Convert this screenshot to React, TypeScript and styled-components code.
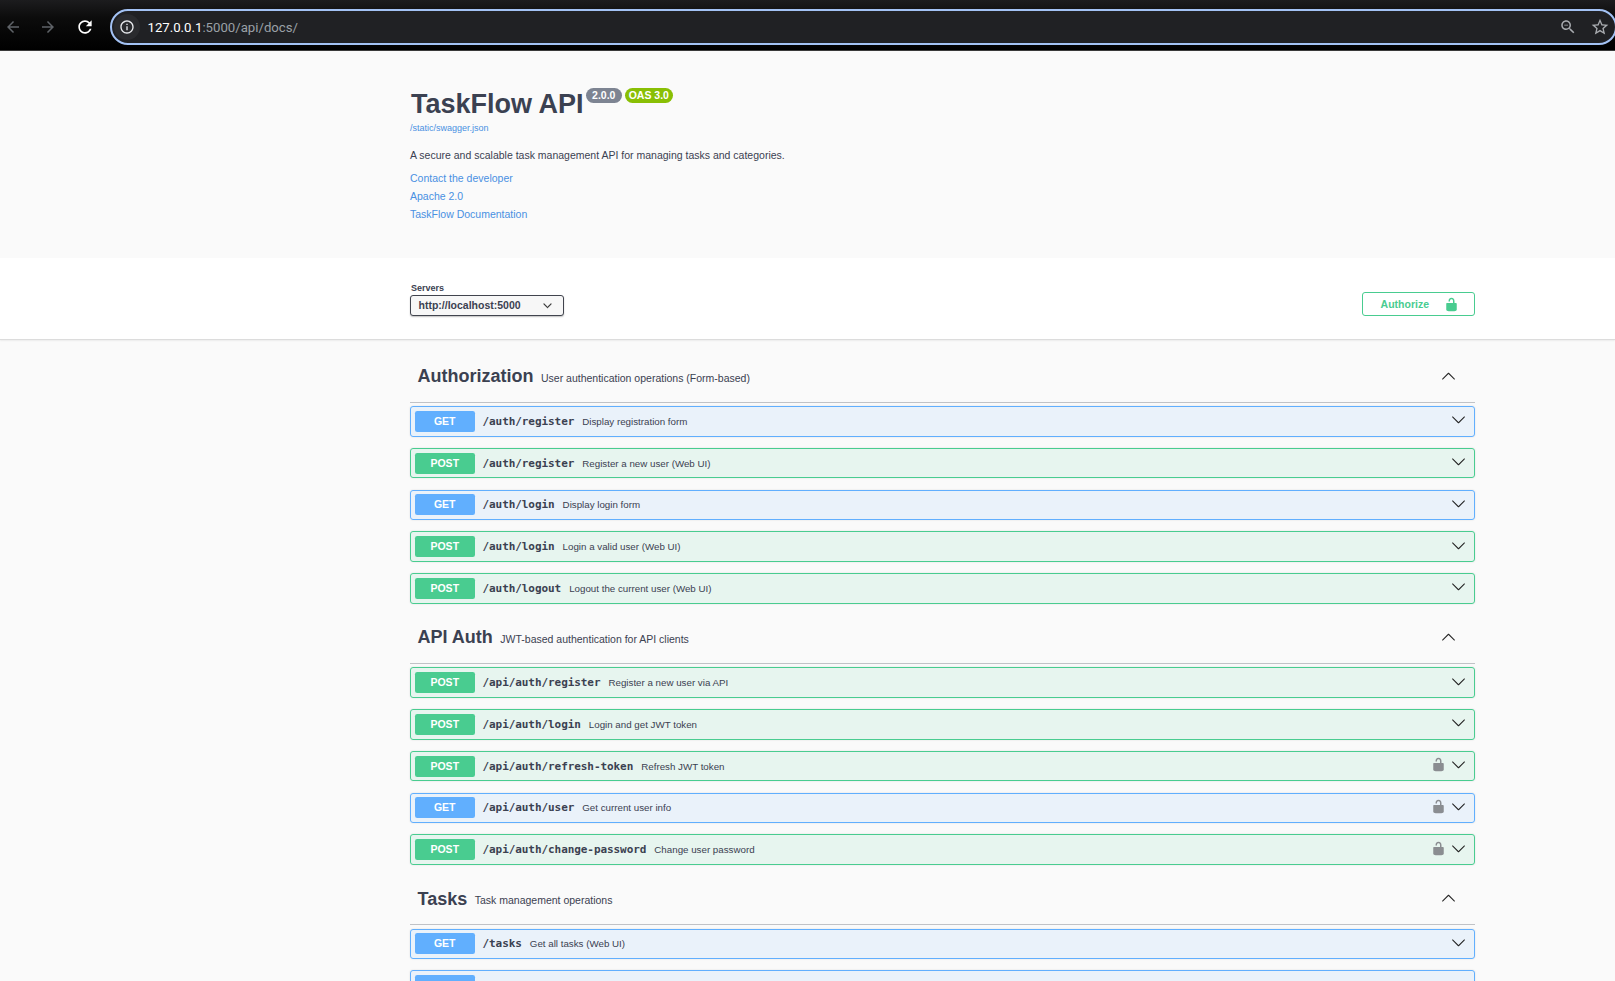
import React from "react";
import styled, { createGlobalStyle } from "styled-components";

const Global = createGlobalStyle`
  html, body { margin: 0; padding: 0; height: 981px; overflow: hidden; background: #fafafa; }
  #root { height: 981px; overflow: hidden; }
  * { box-sizing: border-box; }
`;
const SANS = `"Liberation Sans", Arial, sans-serif`;

const Page = styled.div`
  height: 981px; overflow: hidden; font-family: ${SANS}; color: #3b4151; background: #fafafa;
`;
const BrowserBar = styled.div`
  height: 51px; display: flex; align-items: flex-start; padding: 9px 0 0 0; border-bottom: 1px solid #3a3a3a;
  background: linear-gradient(#1c1c1e 0%, #0c0c0c 35%, #000 100%);
`;
const NavButton = styled.div<{ $w: number }>`
  width: ${p => p.$w}px; height: 36px; display: flex; align-items: center; justify-content: center; flex: none;
`;
const Omnibox = styled.div`
  flex: 1; height: 36px; margin-left: 11.5px; margin-right: -2px; border: 2px solid #a3c2f4; border-radius: 18px;
  background: #202124; display: flex; align-items: center; padding: 0 5px 0 0;
`;
const InfoChip = styled.div`
  width: 26px; height: 26px; margin-left: 2px; border-radius: 50%; background: #2a2b2e;
  display: flex; align-items: center; justify-content: center; flex: none;
`;
const Url = styled.div`
  margin-left: 8px; font-family: "Roboto", "Liberation Sans", sans-serif; font-size: 13.2px; color: #9aa0a6; flex: 1;
  span { color: #fff; }
`;
const OmniIcons = styled.div`
  display: flex; align-items: center; gap: 13px;
`;
const Wrapper = styled.div`
  margin-left: 410px; width: 1065px;
`;
const InfoSection = styled.section`
  height: 207px; padding-top: 29px;
`;
const TitleRow = styled.div`
  display: flex; align-items: flex-start; height: 41px; padding-left: 1px;
`;
const Title = styled.h1`
  margin: 7px 0 0; font-size: 27px; line-height: 34px; font-weight: 700; color: #3b4151; font-family: ${SANS};
`;
const Badge = styled.span<{ $bg: string; $ml: number; $pad: number }>`
  display: inline-block; margin: 7.5px 0 0 ${p => p.$ml}px; height: 15.5px; line-height: 15.5px; padding: 0 ${p => p.$pad}px; border-radius: 7.5px;
  background: ${p => p.$bg}; color: #fff; font-size: 10.5px; font-weight: 700; font-family: ${SANS};
`;
const SpecLink = styled.a`
  display: block; font-size: 9px; line-height: 11px; color: #4990e2; margin-top: 2px;
`;
const Desc = styled.p`
  margin: 12.5px 0 0; font-size: 10.5px; line-height: 16px; color: #3b4151;
`;
const InfoLink = styled.a`
  display: block; font-size: 10.5px; line-height: 18px; color: #4990e2;
`;
const Links = styled.div`
  margin-top: 6px;
`;
const SchemeBar = styled.div`
  height: 82px; background: #fff; border-bottom: 1px solid #dcdcdc; box-shadow: 0 1px 1.5px rgba(0,0,0,.06);
`;
const SchemeInner = styled.div`
  margin-left: 410px; width: 1065px; height: 100%; display: flex; justify-content: space-between; align-items: flex-start; padding-top: 25px;
`;
const ServerBox = styled.div`
  display: flex; flex-direction: column;
`;
const ServerLabel = styled.span`
  font-size: 9px; line-height: 10px; font-weight: 700; color: #3b4151; padding-left: 1px;
`;
const Select = styled.div`
  width: 154px; height: 21px; margin-top: 1.5px; border: 1.5px solid #41444e; border-radius: 3px; background: #f7f7f7;
  box-shadow: 0 1px 1.5px rgba(0,0,0,.25); display: flex; align-items: center; justify-content: space-between;
  padding: 0 11px 0 7.5px; font-size: 10.5px; font-weight: 700; color: #3b4151;
`;
const AuthorizeButton = styled.button`
  width: 113px; height: 24px; margin-top: 9px; border: 1.5px solid #49cc90; border-radius: 3px; background: transparent;
  color: #49cc90; font-family: ${SANS}; font-size: 10.5px; font-weight: 700; display: flex; align-items: center; justify-content: flex-end;
  padding: 0 15px 0 0; gap: 15px;
`;
const OpList = styled(Wrapper)`
  padding-top: 13.5px;
`;
const TagSection = styled.section`
  display: flex; flex-direction: column;
`;
const TagHeader = styled.div`
  height: 49px; border-bottom: 1px solid rgba(59,65,81,.3); display: flex; align-items: center; padding: 0 19px 3px 7.5px; margin-bottom: 3.5px;
`;
const TagName = styled.h3`
  margin: 0; font-size: 18px; font-weight: 700; color: #3b4151; line-height: 24px;
`;
const TagDesc = styled.small`
  margin-left: 7.5px; padding-top: 3px; font-size: 10.5px; color: #3b4151; flex: 1;
`;
const Op = styled.div<{ $c: string }>`
  height: 30.5px; margin-bottom: 11.25px; flex: none; display: flex; align-items: center; padding: 0 8px 0 3.75px; border-radius: 3px;
  border: 1px solid ${p => p.$c}; background: ${p => p.$c}1a; box-shadow: 0 0 2px rgba(0,0,0,.12);
`;
const Method = styled.span<{ $c: string }>`
  width: 60px; height: 21px; flex: none; border-radius: 2.25px; background: ${p => p.$c}; color: #fff; text-align: center;
  font-size: 10.5px; line-height: 21px; font-weight: 700;
`;
const Path = styled.span`
  margin-left: 7.75px; font-family: "DejaVu Sans Mono", monospace; font-size: 11px; font-weight: 700; letter-spacing: -0.07px; color: #3b4151;
`;
const Summary = styled.span`
  margin-left: 8px; font-size: 9.75px; color: #3b4151; flex: 1;
`;
const RowLock = styled.span`
  display: flex; margin: -3px 5px 0 0;
`;
const RowChevron = styled.span`
  display: flex; margin-top: -3px;
`;
const ArrowSvg = styled.svg<{ $up?: boolean }>`
  width: 15px; height: 15px; fill: #222; flex: none; transform: ${p => (p.$up ? "rotate(180deg)" : "none")};
`;

const ARROW = "M17.418 6.109c.272-.268.709-.268.979 0s.271.701 0 .969l-7.908 7.83c-.27.268-.707.268-.979 0l-7.908-7.83c-.27-.268-.27-.701 0-.969.271-.268.709-.268.979 0L10 13.25l7.418-7.141z";
const LOCK = "M15.8 8H14V5.6C14 2.703 12.665 1 10 1 7.334 1 6 2.703 6 5.6V6h2v-.801C8 3.754 8.797 3 10 3c1.203 0 2 .754 2 2.199V8H4c-.553 0-1 .646-1 1.199V17c0 .549.428 1.139.951 1.307l1.197.387C5.672 18.861 6.55 19 7.1 19h5.8c.549 0 1.428-.139 1.951-.307l1.196-.387c.524-.167.953-.757.953-1.306V9.199C17 8.646 16.352 8 15.8 8z";

const Lock = ({ color, size }: { color: string; size: number }) => (
  <svg viewBox="0 0 20 20" width={size} height={size} fill={color}><path d={LOCK} /></svg>
);
const Arrow = ({ up }: { up?: boolean }) => (
  <ArrowSvg $up={up} viewBox="0 0 20 20"><path d={ARROW} /></ArrowSvg>
);
const Mat = ({ d, color, size = 20 }: { d: string; color: string; size?: number }) => (
  <svg viewBox="0 0 24 24" width={size} height={size} fill={color}><path d={d} /></svg>
);

type OpData = { m: "GET" | "POST"; p: string; s: string; lock?: boolean };
const SECTIONS: { name: string; desc: string; ops: OpData[] }[] = [
  { name: "Authorization", desc: "User authentication operations (Form-based)", ops: [
    { m: "GET", p: "/auth/register", s: "Display registration form" },
    { m: "POST", p: "/auth/register", s: "Register a new user (Web UI)" },
    { m: "GET", p: "/auth/login", s: "Display login form" },
    { m: "POST", p: "/auth/login", s: "Login a valid user (Web UI)" },
    { m: "POST", p: "/auth/logout", s: "Logout the current user (Web UI)" },
  ]},
  { name: "API Auth", desc: "JWT-based authentication for API clients", ops: [
    { m: "POST", p: "/api/auth/register", s: "Register a new user via API" },
    { m: "POST", p: "/api/auth/login", s: "Login and get JWT token" },
    { m: "POST", p: "/api/auth/refresh-token", s: "Refresh JWT token", lock: true },
    { m: "GET", p: "/api/auth/user", s: "Get current user info", lock: true },
    { m: "POST", p: "/api/auth/change-password", s: "Change user password", lock: true },
  ]},
  { name: "Tasks", desc: "Task management operations", ops: [
    { m: "GET", p: "/tasks", s: "Get all tasks (Web UI)" },
    { m: "GET", p: "", s: "" },
  ]},
];
const COLORS = { GET: "#61affe", POST: "#49cc90" };

export default function App() {
  return (
    <Page>
      <Global />
      <BrowserBar>
        <NavButton $w={25}><Mat color="#5f6368" size={18} d="M20 11H7.83l5.59-5.59L12 4l-8 8 8 8 1.41-1.41L7.83 13H20v-2z" /></NavButton>
        <NavButton $w={46}><Mat color="#5f6368" size={18} d="M4 11h12.17l-5.59-5.59L12 4l8 8-8 8-1.41-1.41L16.17 13H4v-2z" /></NavButton>
        <NavButton $w={27}><Mat color="#fff" size={20} d="M17.65 6.35C16.2 4.9 14.21 4 12 4c-4.42 0-7.99 3.58-7.99 8s3.57 8 7.99 8c3.73 0 6.84-2.55 7.73-6h-2.08c-.82 2.33-3.04 4-5.65 4-3.31 0-6-2.69-6-6s2.69-6 6-6c1.66 0 3.14.69 4.22 1.78L13 11h7V4l-2.35 2.35z" /></NavButton>
        <Omnibox>
          <InfoChip><Mat color="#e8eaed" size={16} d="M11 7h2v2h-2zm0 4h2v6h-2zm1-9C6.48 2 2 6.48 2 12s4.48 10 10 10 10-4.48 10-10S17.52 2 12 2zm0 18c-4.41 0-8-3.59-8-8s3.59-8 8-8 8 3.59 8 8-3.59 8-8 8z" /></InfoChip>
          <Url><span>127.0.0.1</span>:5000/api/docs/</Url>
          <OmniIcons>
            <Mat color="#a8abaf" size={18} d="M15.5 14h-.79l-.28-.27C15.41 12.59 16 11.11 16 9.5 16 5.91 13.09 3 9.5 3S3 5.91 3 9.5 5.91 16 9.5 16c1.61 0 3.09-.59 4.23-1.57l.27.28v.79l5 4.99L20.49 19l-4.99-5zm-6 0C7.01 14 5 11.99 5 9.5S7.01 5 9.5 5 14 7.01 14 9.5 11.99 14 9.5 14zM7 9h5v1H7z" />
            <Mat color="#a8abaf" size={20} d="M22 9.24l-7.19-.62L12 2 9.19 8.63 2 9.24l5.46 4.73L5.82 21 12 17.27 18.18 21l-1.63-7.03L22 9.24zM12 15.4l-3.76 2.27 1-4.28-3.32-2.88 4.38-.38L12 6.1l1.71 4.04 4.38.38-3.32 2.88 1 4.28L12 15.4z" />
          </OmniIcons>
        </Omnibox>
      </BrowserBar>

      <Wrapper>
        <InfoSection>
          <TitleRow>
            <Title>TaskFlow API</Title>
            <Badge $bg="#7d8492" $ml={2} $pad={6.5}>2.0.0</Badge>
            <Badge $bg="#89bf04" $ml={3} $pad={3.75}>OAS 3.0</Badge>
          </TitleRow>
          <SpecLink>/static/swagger.json</SpecLink>
          <Desc>A secure and scalable task management API for managing tasks and categories.</Desc>
          <Links>
            <InfoLink>Contact the developer</InfoLink>
            <InfoLink>Apache 2.0</InfoLink>
            <InfoLink>TaskFlow Documentation</InfoLink>
          </Links>
        </InfoSection>
      </Wrapper>

      <SchemeBar>
        <SchemeInner>
          <ServerBox>
            <ServerLabel>Servers</ServerLabel>
            <Select>
              http://localhost:5000
              <svg viewBox="0 0 20 20" width="9" height="9" fill="#222"><path d={ARROW} stroke="#222" strokeWidth="1" /></svg>
            </Select>
          </ServerBox>
          <AuthorizeButton>
            Authorize
            <Lock color="#49cc90" size={15} />
          </AuthorizeButton>
        </SchemeInner>
      </SchemeBar>

      <OpList>
        {SECTIONS.map(sec => (
          <TagSection key={sec.name}>
            <TagHeader>
              <TagName>{sec.name}</TagName>
              <TagDesc>{sec.desc}</TagDesc>
              <Arrow up />
            </TagHeader>
            {sec.ops.map((op, i) => (
              <Op key={i} $c={COLORS[op.m]}>
                <Method $c={COLORS[op.m]}>{op.p ? op.m : ""}</Method>
                <Path>{op.p}</Path>
                <Summary>{op.s}</Summary>
                {op.lock && <RowLock><Lock color="#8a8d91" size={15} /></RowLock>}
                <RowChevron><Arrow /></RowChevron>
              </Op>
            ))}
          </TagSection>
        ))}
      </OpList>
    </Page>
  );
}
